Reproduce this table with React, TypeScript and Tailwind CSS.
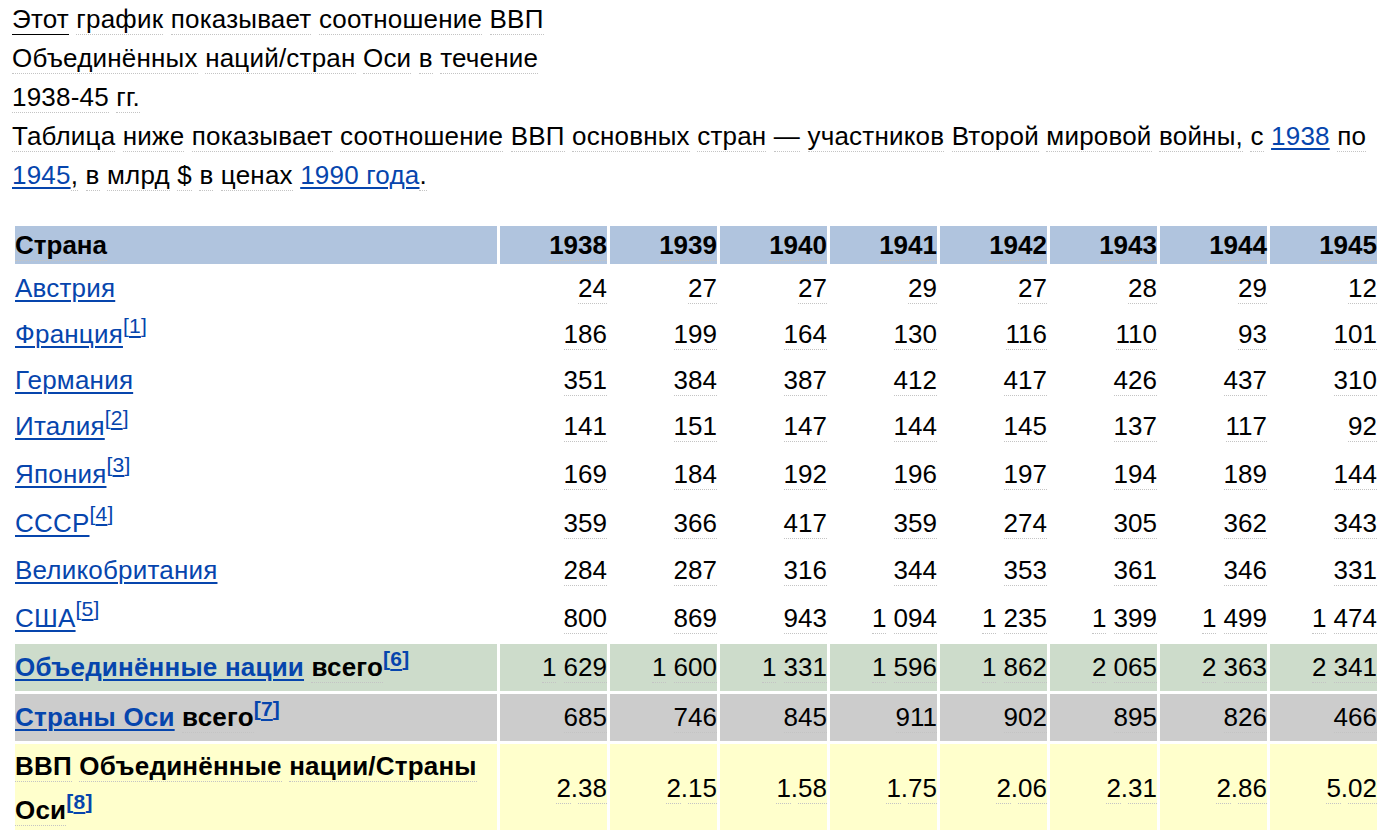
import React from 'react';

const font = { fontFamily: '"Liberation Sans", Arial, sans-serif' };

function W({ text, hover }: { text: string; hover?: boolean }) {
  const words = text.split(' ');
  return (
    <>
      {words.map((w, i) => (
        <React.Fragment key={i}>
          {i > 0 && ' '}
          <span
            className={
              hover && i === 0
                ? 'border-b border-solid border-black'
                : 'border-b border-dotted border-[#c4c4c4]'
            }
          >
            {w}
          </span>
        </React.Fragment>
      ))}
    </>
  );
}

function L({ children }: { children: React.ReactNode }) {
  return (
    <a
      href="#"
      className="text-[#0645ad] underline decoration-2 underline-offset-[3px]"
    >
      {children}
    </a>
  );
}

function Ref({ n }: { n: string }) {
  return (
    <sup className="text-[21px]">
      <L>[{n}]</L>
    </sup>
  );
}

const years = ['1938', '1939', '1940', '1941', '1942', '1943', '1944', '1945'];

const rows = [
  { name: 'Австрия', h: 'h-[43px]', v: ['24', '27', '27', '29', '27', '28', '29', '12'] },
  { name: 'Франция', ref: '1', h: 'h-[43px]', v: ['186', '199', '164', '130', '116', '110', '93', '101'] },
  { name: 'Германия', h: 'h-[43px]', v: ['351', '384', '387', '412', '417', '426', '437', '310'] },
  { name: 'Италия', ref: '2', h: 'h-[43px]', v: ['141', '151', '147', '144', '145', '137', '117', '92'] },
  { name: 'Япония', ref: '3', h: 'h-[46px]', v: ['169', '184', '192', '196', '197', '194', '189', '144'] },
  { name: 'СССР', ref: '4', h: 'h-[46px]', v: ['359', '366', '417', '359', '274', '305', '362', '343'] },
  { name: 'Великобритания', h: 'h-[43px]', v: ['284', '287', '316', '344', '353', '361', '346', '331'] },
  { name: 'США', ref: '5', h: 'h-[46px]', v: ['800', '869', '943', '1 094', '1 235', '1 399', '1 499', '1 474'] },
];

const allies = ['1 629', '1 600', '1 331', '1 596', '1 862', '2 065', '2 363', '2 341'];
const axis = ['685', '746', '845', '911', '902', '895', '826', '466'];
const ratio = ['2.38', '2.15', '1.58', '1.75', '2.06', '2.31', '2.86', '5.02'];

function Nums({ v }: { v: string[] }) {
  return (
    <>
      {v.map((n, i) => (
        <td key={i} className="text-right align-middle p-0">
          <W text={n} />
        </td>
      ))}
    </>
  );
}

function Ratio({ v }: { v: string[] }) {
  return (
    <>
      {v.map((n, i) => {
        const [a, b] = n.split('.');
        return (
          <td key={i} className="text-right align-middle p-0">
            <span className="border-b border-dotted border-[#c4c4c4]">{a}</span>.
            <span className="border-b border-dotted border-[#c4c4c4]">{b}</span>
          </td>
        );
      })}
    </>
  );
}

export default function App() {
  return (
    <div className="bg-white min-h-screen pl-3 text-black" style={font}>
      <div className="text-[26px] leading-[39px] tracking-[0.2px]">
        <div>
          <W text="Этот график показывает соотношение ВВП" hover />
          <br />
          <W text="Объединённых наций/стран Оси в течение" />
          <br />
          <W text="1938-45 гг." />
        </div>
        <p>
          <W text="Таблица ниже показывает соотношение ВВП основных стран — участников Второй мировой войны, с" />{' '}
          <L>1938</L> <W text="по" />
          <br />
          <L>1945</L>
          <W text=", в млрд $ в ценах" /> <L>1990 года</L>
          <W text="." />
        </p>
      </div>

      <table className="mt-[28px] w-[1368px] table-fixed border-separate border-spacing-[3px] text-[26px] leading-[41px]">
        <colgroup>
          <col className="w-[482px]" />
          {years.map((y) => (
            <col key={y} className="w-[107px]" />
          ))}
        </colgroup>
        <thead>
          <tr className="h-[38px] font-bold">
            <th className="bg-[#b0c4de] text-left p-0 leading-[38px]">
              <W text="Страна" />
            </th>
            {years.map((y) => (
              <th key={y} className="bg-[#b0c4de] text-right p-0 leading-[38px]">
                <W text={y} />
              </th>
            ))}
          </tr>
        </thead>
        <tbody>
          {rows.map((r) => (
            <tr key={r.name} className={r.h}>
              <td className="p-0 align-middle tracking-[0.2px]">
                <L>{r.name}</L>
                {r.ref && <Ref n={r.ref} />}
              </td>
              <Nums v={r.v} />
            </tr>
          ))}
          <tr className="h-[47px] [&>td]:bg-[#cddccb]">
            <td className="p-0 align-middle font-bold tracking-[0.2px]">
              <L>Объединённые нации</L> <W text="всего" />
              <Ref n="6" />
            </td>
            <Nums v={allies} />
          </tr>
          <tr className="h-[47px] [&>td]:bg-[#cccccc]">
            <td className="p-0 align-middle font-bold tracking-[0.2px]">
              <L>Страны Оси</L> <W text="всего" />
              <Ref n="7" />
            </td>
            <Nums v={axis} />
          </tr>
          <tr className="[&>td]:bg-[#ffffcc]">
            <td className="p-0 align-middle font-bold leading-[44px] tracking-[0.2px]">
              <W text="ВВП Объединённые нации/Страны" />
              <br />
              <W text="Оси" />
              <Ref n="8" />
            </td>
            <Ratio v={ratio} />
          </tr>
        </tbody>
      </table>
    </div>
  );
}
